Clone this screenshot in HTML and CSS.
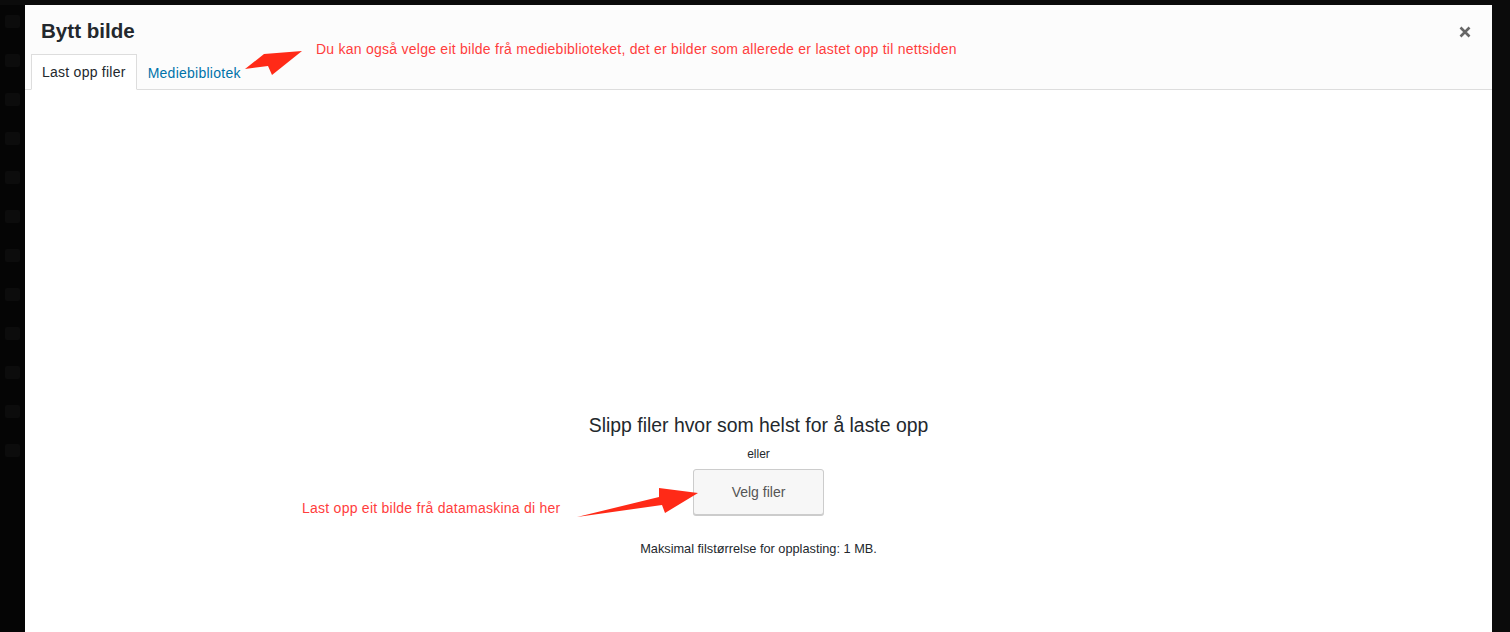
FILE: index.html
```html
<!DOCTYPE html>
<html lang="no">
<head>
<meta charset="utf-8">
<title>Bytt bilde</title>
<link rel="stylesheet" href="styles.css">
</head>
<body>
<div class="backdrop">
  <div class="sidebar">
    <span class="ghost"></span>
    <span class="ghost"></span>
    <span class="ghost"></span>
    <span class="ghost"></span>
    <span class="ghost"></span>
    <span class="ghost"></span>
    <span class="ghost"></span>
    <span class="ghost"></span>
    <span class="ghost"></span>
    <span class="ghost"></span>
    <span class="ghost"></span>
    <span class="ghost"></span>
  </div>
  <div class="modal">
    <div class="modal-head">
      <h1 class="title">Bytt bilde</h1>
      <button class="close" aria-label="Lukk">
        <svg width="12" height="12" viewBox="0 0 12 12"><path d="M1.5 1.5 L10.5 10.5 M10.5 1.5 L1.5 10.5" stroke="#666" stroke-width="2.6" stroke-linecap="butt"/></svg>
      </button>
      <div class="tabs">
        <span class="tab active">Last opp filer</span>
        <a class="tab link">Mediebibliotek</a>
      </div>
    </div>
    <div class="modal-body">
      <div class="uploader">
        <p class="drop">Slipp filer hvor som helst for å laste opp</p>
        <p class="or">eller</p>
        <button class="select">Velg filer</button>
        <p class="max">Maksimal filstørrelse for opplasting: 1 MB.</p>
      </div>
    </div>
  </div>
  <p class="note note-top">Du kan også velge eit bilde frå mediebiblioteket, det er bilder som allerede er lastet opp til nettsiden</p>
  <p class="note note-bottom">Last opp eit bilde frå datamaskina di her</p>
  <svg class="arrow" width="1510" height="632" viewBox="0 0 1510 632">
    <polygon points="245,69 264,54 302,51 272,75 268,66" fill="#ff2a17"/>
    <polygon points="577,517 659,497 659,488 698,493 665,513 662,505" fill="#ff2a17"/>
  </svg>
</div>
</body>
</html>
```

FILE: styles.css
```css
html, body {
  margin: 0;
  padding: 0;
  height: 100%;
}
body {
  background: #0b0b0b;
  font-family: "Liberation Sans", Arial, sans-serif;
  overflow: hidden;
}
.backdrop {
  position: relative;
  display: flex;
  height: 632px;
  padding-top: 5px;
  box-sizing: border-box;
}
.sidebar {
  width: 25px;
  flex: none;
  display: flex;
  flex-direction: column;
  align-items: center;
  gap: 26px;
  padding-top: 10px;
  background: #050505;
}
.ghost {
  display: block;
  width: 15px;
  height: 13px;
  background: #0c0c0c;
  border-radius: 2px;
}
.modal {
  width: 1467px;
  flex: none;
  display: flex;
  flex-direction: column;
  background: #fff;
}
.modal-head {
  position: relative;
  background: #fcfcfc;
  border-bottom: 1px solid #dddddd;
  height: 85px;
  box-sizing: border-box;
  padding: 0 0 0 6px;
  display: flex;
  flex-direction: column;
  justify-content: flex-end;
}
.title {
  margin: 0 0 7px 10px;
  font-size: 20.6px;
  font-weight: 700;
  color: #23282d;
  line-height: 32px;
}
.close {
  position: absolute;
  top: 20px;
  right: 20px;
  width: 14px;
  height: 14px;
  padding: 0;
  border: 0;
  background: none;
  display: flex;
  align-items: center;
  justify-content: center;
}
.tabs {
  display: flex;
  align-items: flex-end;
  margin-bottom: -1px;
}
.tab {
  font-size: 14px;
  line-height: 18px;
  letter-spacing: 0.25px;
  padding: 8px 10px 8px;
  border: 1px solid transparent;
  border-bottom: 0;
  text-decoration: none;
}
.tab.active {
  color: #23282d;
  background: #fff;
  border-color: #dddddd;
  border-bottom: 1px solid #fff;
}
.tab.link {
  color: #0073aa;
}
.modal-body {
  flex: 1;
  background: #fff;
}
.uploader {
  display: flex;
  flex-direction: column;
  align-items: center;
  padding-top: 321px;
  color: #23282d;
}
.drop {
  margin: 0;
  font-size: 19.4px;
  line-height: 28px;
}
.or {
  margin: 7px 0 0;
  font-size: 12px;
  line-height: 16px;
}
.select {
  margin-top: 7px;
  width: 131px;
  height: 46px;
  background: #f7f7f7;
  border: 1px solid #cccccc;
  border-radius: 3px;
  box-shadow: 0 1px 0 #cccccc;
  color: #555;
  font-family: "Liberation Sans", Arial, sans-serif;
  font-size: 14px;
  padding: 0;
}
.max {
  margin: 26px 0 0;
  font-size: 12.75px;
  line-height: 16px;
}
.note {
  position: absolute;
  margin: 0;
  color: #ff3d3d;
  font-size: 14px;
  letter-spacing: 0.25px;
  line-height: 18px;
  white-space: nowrap;
}
.note-top {
  left: 316px;
  top: 40px;
}
.note-bottom {
  left: 302px;
  top: 499px;
}
.arrow {
  position: absolute;
  left: 0;
  top: 0;
  pointer-events: none;
}
```
